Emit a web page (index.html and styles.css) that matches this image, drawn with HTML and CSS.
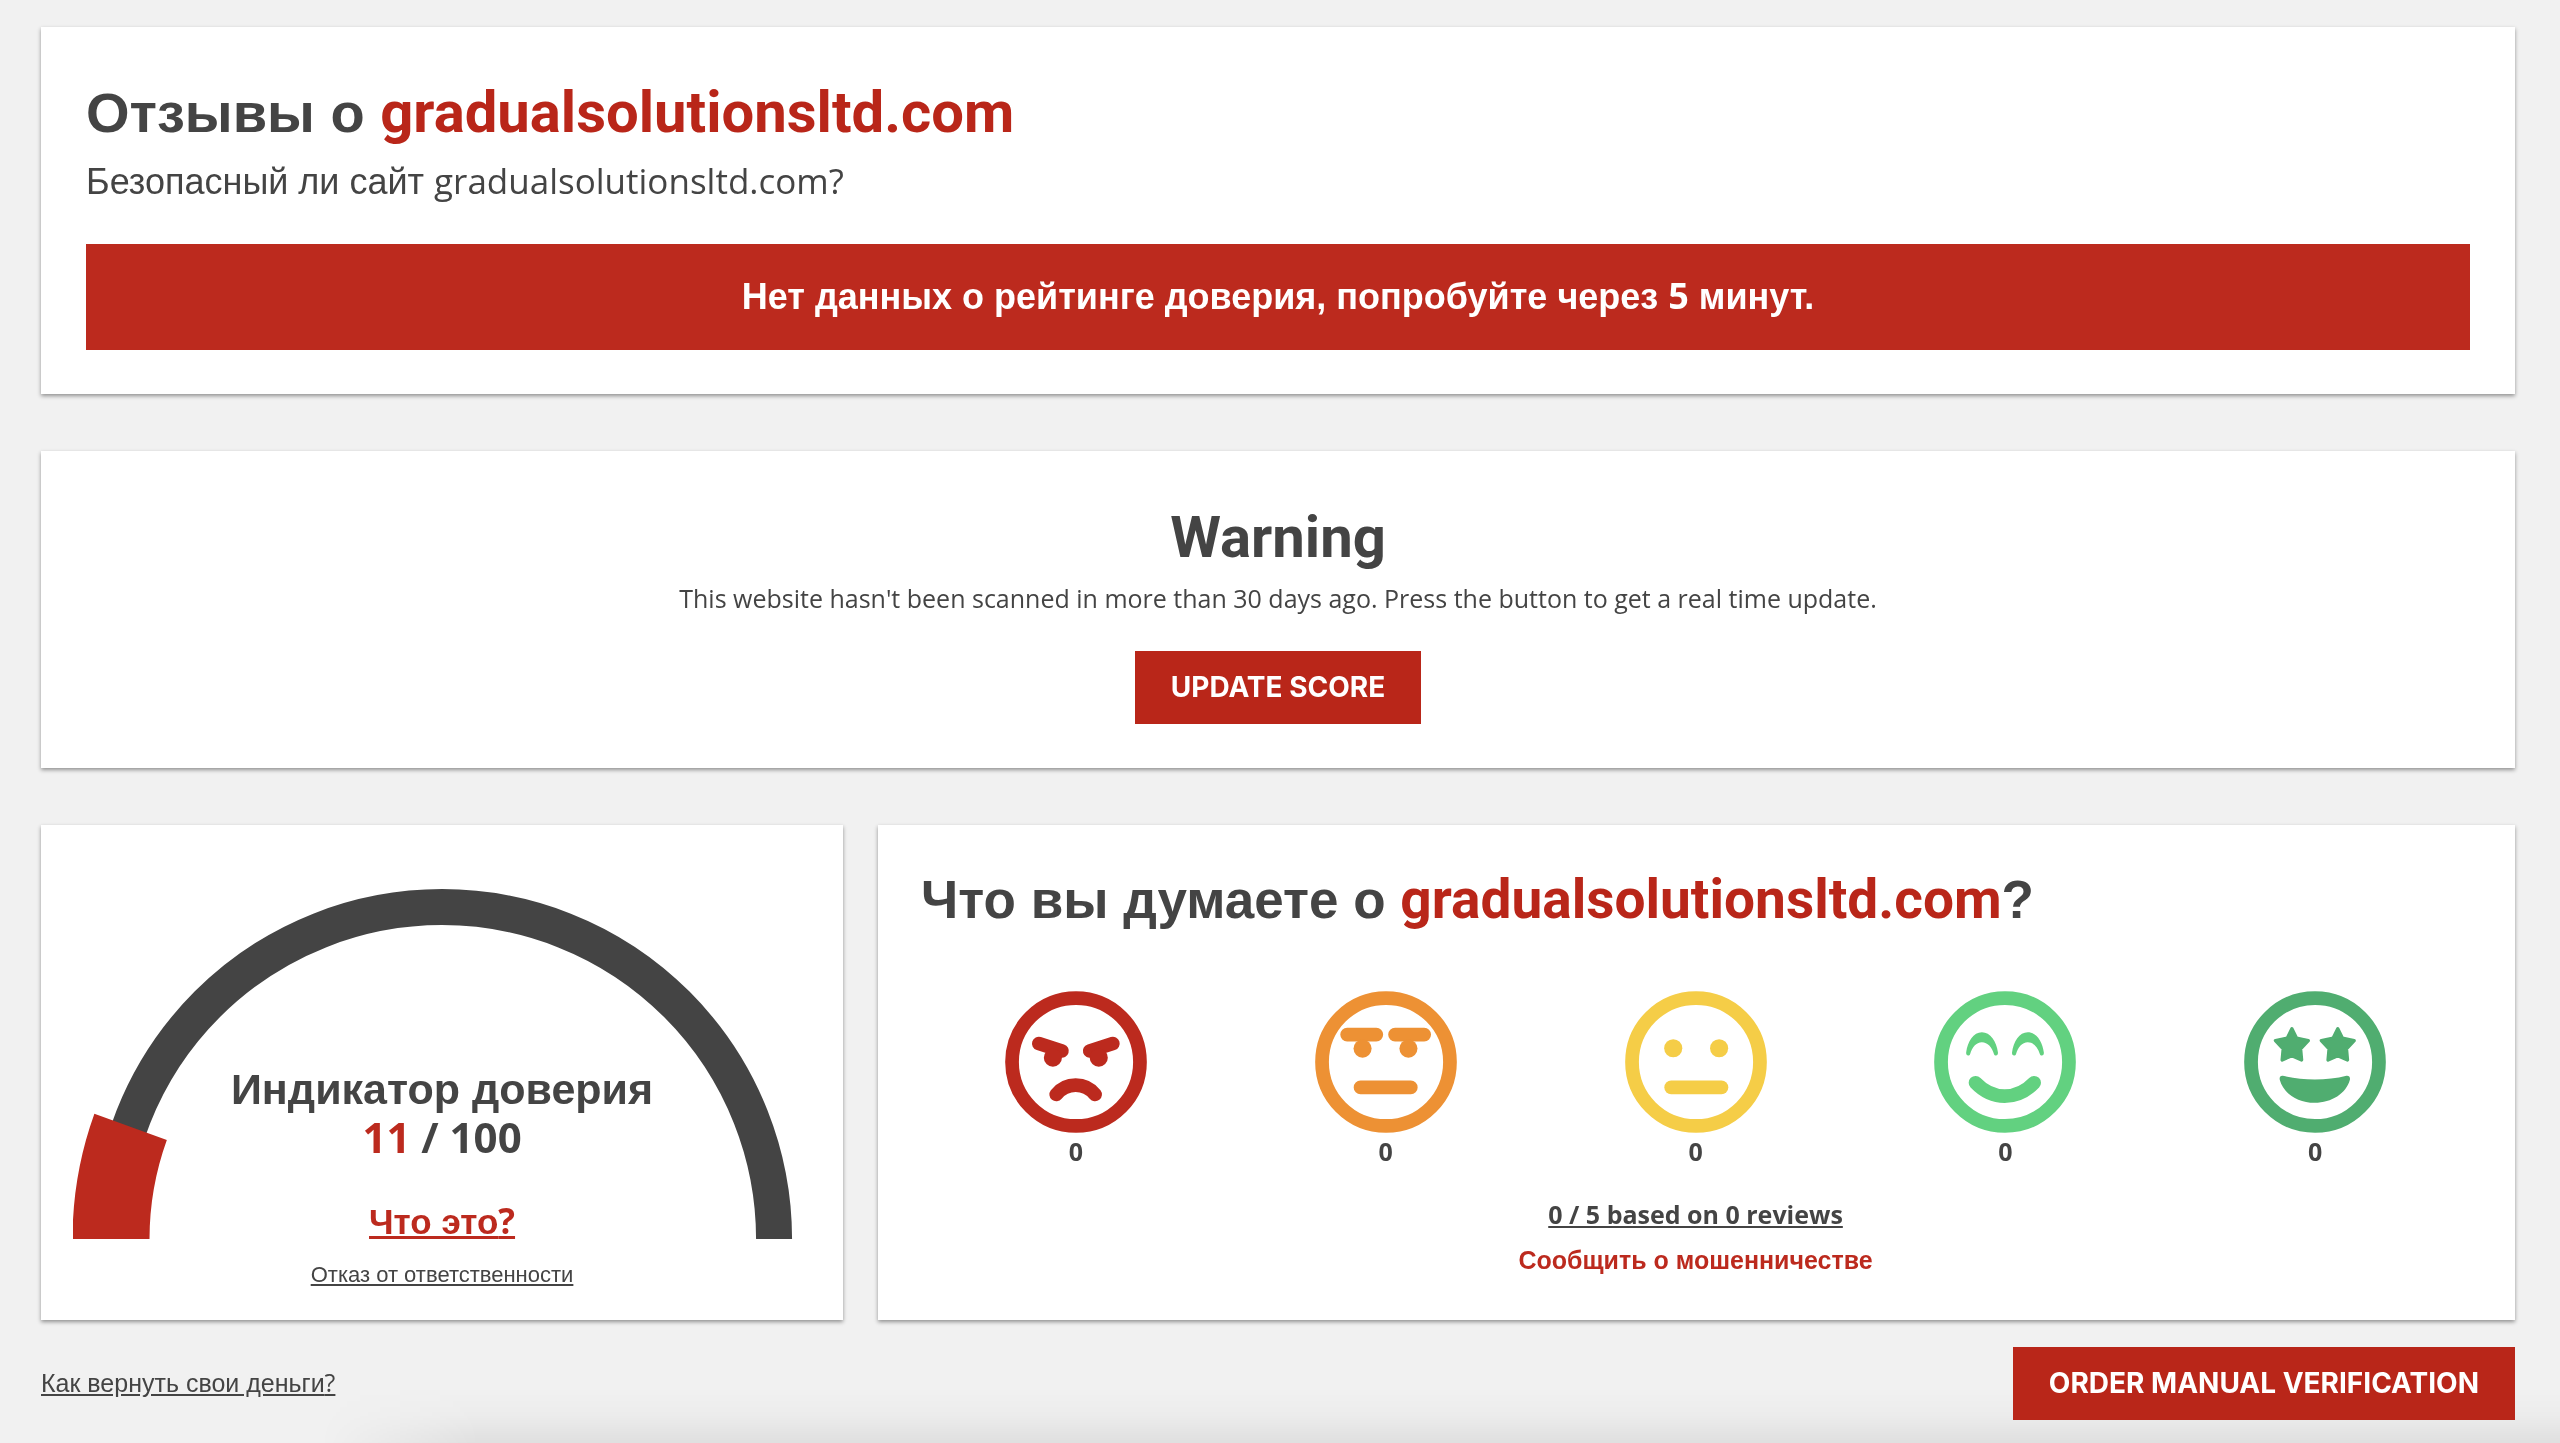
FILE: index.html
```
<!DOCTYPE html>
<html lang="ru">
<head>
<meta charset="utf-8">
<meta name="viewport" content="width=device-width, initial-scale=1">
<title>Отзывы о gradualsolutionsltd.com</title>
<link rel="stylesheet" href="styles.css">
</head>
<body>
<main class="page">
  <section class="card">
    <h1 class="title">Отзывы о <span class="domain">gradualsolutionsltd.com</span></h1>
    <p class="subtitle">Безопасный ли сайт <span class="latin">gradualsolutionsltd.com?</span></p>
    <div class="banner">Нет данных о рейтинге доверия, попробуйте через <span class="latin">5</span> минут.</div>
  </section>

  <section class="card warning">
    <h2 class="warning-title">Warning</h2>
    <p class="warning-text">This website hasn't been scanned in more than 30 days ago. Press the button to get a real time update.</p>
    <button class="button" type="button">UPDATE SCORE</button>
  </section>

  <div class="columns">
    <section class="card trust">
      <svg class="gauge" viewBox="0 0 738 369" aria-hidden="true">
        <path d="M37 369A332 332 0 0 1 701 369" fill="none" stroke="#444" stroke-width="36"/>
        <path d="M38 369A331 331 0 0 1 57.600 256.900" fill="none" stroke="#bc2a1e" stroke-width="77"/>
      </svg>
      <div class="trust-info">
        <h2 class="trust-title">Индикатор доверия</h2>
        <p class="trust-score"><span class="value">11</span> / 100</p>
        <a class="what" href="#about">Что это<span class="latin">?</span></a>
        <a class="disclaimer" href="#disclaimer">Отказ от ответственности</a>
      </div>
    </section>

    <section class="card opinion">
      <h2 class="opinion-title">Что вы думаете о <span class="domain">gradualsolutionsltd.com</span>?</h2>
      <div class="faces">
        <button class="face angry" type="button">
          <svg viewBox="0 0 424 424" aria-hidden="true">
            <circle class="line" cx="212" cy="212" r="191"/>
            <path class="line" d="M101 157L170 179M322 157L253 179M153 309C168 290 188 281 211 281S254 290 269 309"/>
            <circle cx="143" cy="199" r="27"/><circle cx="280" cy="199" r="27"/>
          </svg>
          <span>0</span>
        </button>
        <button class="face annoyed" type="button">
          <svg viewBox="0 0 424 424" aria-hidden="true">
            <circle class="line" cx="212" cy="212" r="191"/>
            <path class="line" d="M96 130H183M239 130H326M136 288H286"/>
            <circle cx="142" cy="172" r="27"/><circle cx="279" cy="172" r="27"/>
          </svg>
          <span>0</span>
        </button>
        <button class="face neutral" type="button">
          <svg viewBox="0 0 424 424" aria-hidden="true">
            <circle class="line" cx="212" cy="212" r="191"/>
            <path class="line" d="M138 288H288"/>
            <circle cx="144" cy="171" r="27"/><circle cx="281" cy="171" r="27"/>
          </svg>
          <span>0</span>
        </button>
        <button class="face happy" type="button">
          <svg viewBox="0 0 424 424" aria-hidden="true">
            <circle class="line" cx="212" cy="212" r="191"/>
            <path class="line" d="M124 274C150 301 180 314 211 314S273 301 299 274"/>
            <path d="M96 184C100 150 118 123 143 123S187 150 191 184C192 195 181 195 179 188C173 168 160 153 143 153S114 168 108 188C106 195 95 195 96 184Z"/>
            <path d="M233 184C237 150 255 123 280 123S324 150 328 184C329 195 318 195 316 188C310 168 297 153 280 153S251 168 245 188C243 195 232 195 233 184Z"/>
          </svg>
          <span>0</span>
        </button>
        <button class="face delighted" type="button">
          <svg viewBox="0 0 424 424" aria-hidden="true">
            <circle class="line" cx="212" cy="212" r="191"/>
            <path class="star" d="M143 113L157 141L192 148L169 173L172 206L143 193L114 206L117 173L94 148L129 141ZM280 113L294 141L329 148L306 173L309 206L280 193L251 206L254 173L231 148L266 141Z"/>
            <path d="M116 253C175 268 248 268 306 253C314 252 318 258 316 266C305 306 262 334 211 334S118 306 107 266C105 258 108 252 116 253Z"/>
          </svg>
          <span>0</span>
        </button>
      </div>
      <div class="summary">
        <a class="reviews" href="#reviews">0 / 5 based on 0 reviews</a>
        <a class="report" href="#report">Сообщить о мошенничестве</a>
      </div>
    </section>
  </div>

  <footer class="bottom">
    <a class="refund" href="#refund">Как вернуть свои деньги<span class="latin">?</span></a>
    <button class="button" type="button">ORDER MANUAL VERIFICATION</button>
  </footer>
</main>
</body>
</html>
```
FILE: styles.css
```
:root {
  --ink: #444;
  --red: #bc2a1e;
  --red-deep: #b92619;
  --cyrillic: "Liberation Sans", Arial, sans-serif;
  --latin: "Open Sans", "Noto Sans", sans-serif;
  --display: Roboto, "Liberation Sans", sans-serif;
}

* {
  box-sizing: border-box;
}

body {
  margin: 0;
  background: #f1f1f1;
  color: var(--ink);
  font-family: var(--cyrillic);
  font-size: 25px;
}

/* Soft shade along the lower edge of the window */
body::after {
  content: "";
  position: fixed;
  z-index: -1;
  left: 320px;
  right: 0;
  bottom: 0;
  height: 56px;
  background: linear-gradient(to top, rgba(0, 0, 0, 0.07), rgba(0, 0, 0, 0.02) 50%, transparent);
  mask-image: linear-gradient(to right, transparent, #000 160px);
}

h1,
h2,
p {
  margin: 0;
}

a {
  color: inherit;
}

.page {
  padding: 27px 45px 23px 41px;
}

.card {
  background: #fff;
  padding: 44px 45px;
  box-shadow: 0 2px 4px rgba(0, 0, 0, 0.4);
  margin-bottom: 57px;
}

.latin {
  font-family: var(--latin);
}

.domain {
  color: var(--red-deep);
  font-family: var(--display);
}

.title {
  font-size: 56px;
  line-height: 84px;
}

.title .domain {
  font-size: 58px;
  line-height: 1;
}

.subtitle {
  font-size: 36px;
  line-height: 54px;
  margin-bottom: 35px;
}

.subtitle .latin {
  font-size: 35px;
  line-height: 1;
}

.banner {
  background: var(--red);
  color: #fff;
  font-size: 36px;
  font-weight: 700;
  line-height: 42px;
  padding: 32px;
  text-align: center;
}

.banner .latin {
  line-height: 1;
}

.warning {
  text-align: center;
}

.warning-title {
  font-family: var(--display);
  font-size: 58px;
  line-height: 84px;
}

.warning-text {
  font-family: var(--latin);
  line-height: 38px;
  margin-bottom: 34px;
}

.button {
  border: 0;
  background: var(--red-deep);
  color: #fff;
  font-family: Inter, var(--display);
  font-size: 28px;
  font-weight: 700;
  line-height: 33px;
  padding: 20px 36px;
  vertical-align: top;
  cursor: pointer;
}

.columns {
  display: grid;
  grid-template-columns: 49fr 100fr;
  gap: 35px;
  margin-bottom: 27px;
}

.columns .card {
  margin-bottom: 0;
}

.trust {
  display: grid;
  align-items: start;
  padding: 45px 32px 30px;
}

.gauge {
  grid-area: 1 / 1;
  display: block;
  width: 100%;
}

.trust-info {
  grid-area: 1 / 1;
  display: flex;
  flex-direction: column;
  align-items: center;
  padding-top: 195px;
}

.trust-title,
.trust-score {
  font-size: 43px;
  font-weight: 700;
  line-height: 48px;
}

.trust-score {
  font-family: var(--latin);
  font-size: 42px;
  margin-bottom: 39px;
}

.value {
  color: var(--red);
}

.what {
  color: var(--red);
  font-size: 35px;
  font-weight: 700;
  line-height: 44px;
  margin-bottom: 16px;
}

.what .latin,
.refund .latin {
  line-height: 1;
}

.disclaimer {
  font-size: 22px;
  line-height: 30px;
}

.opinion {
  padding: 44px 45px 42px 43px;
}

.opinion-title {
  font-size: 53px;
  line-height: 62px;
  margin-bottom: 60px;
}

.opinion-title .domain {
  font-size: 55px;
  line-height: 1;
}

.faces {
  display: grid;
  grid-template-columns: repeat(5, 1fr);
  justify-items: center;
  margin-bottom: 28px;
}

.face {
  display: flex;
  flex-direction: column;
  align-items: center;
  border: 0;
  background: none;
  padding: 0;
  cursor: pointer;
}

.face svg {
  display: block;
  width: 142px;
  height: 142px;
  fill: currentColor;
}

.face .line {
  fill: none;
  stroke: currentColor;
  stroke-width: 41;
  stroke-linecap: round;
}

.face .star {
  stroke: currentColor;
  stroke-width: 10;
  stroke-linejoin: round;
}

.face span {
  color: var(--ink);
  font-family: var(--latin);
  font-size: 25px;
  font-weight: 700;
  line-height: 36px;
}

.angry {
  color: #bc2a1e;
}

.annoyed {
  color: #ed9134;
}

.neutral {
  color: #f5cd47;
}

.happy {
  color: #62d180;
}

.delighted {
  color: #50ad70;
}

.summary {
  display: flex;
  flex-direction: column;
  align-items: center;
  gap: 12px;
  font-weight: 700;
  line-height: 34px;
}

.reviews {
  font-family: var(--latin);
}

.report {
  color: var(--red);
  text-decoration: none;
}

.bottom {
  display: flex;
  align-items: center;
  justify-content: space-between;
}
```
